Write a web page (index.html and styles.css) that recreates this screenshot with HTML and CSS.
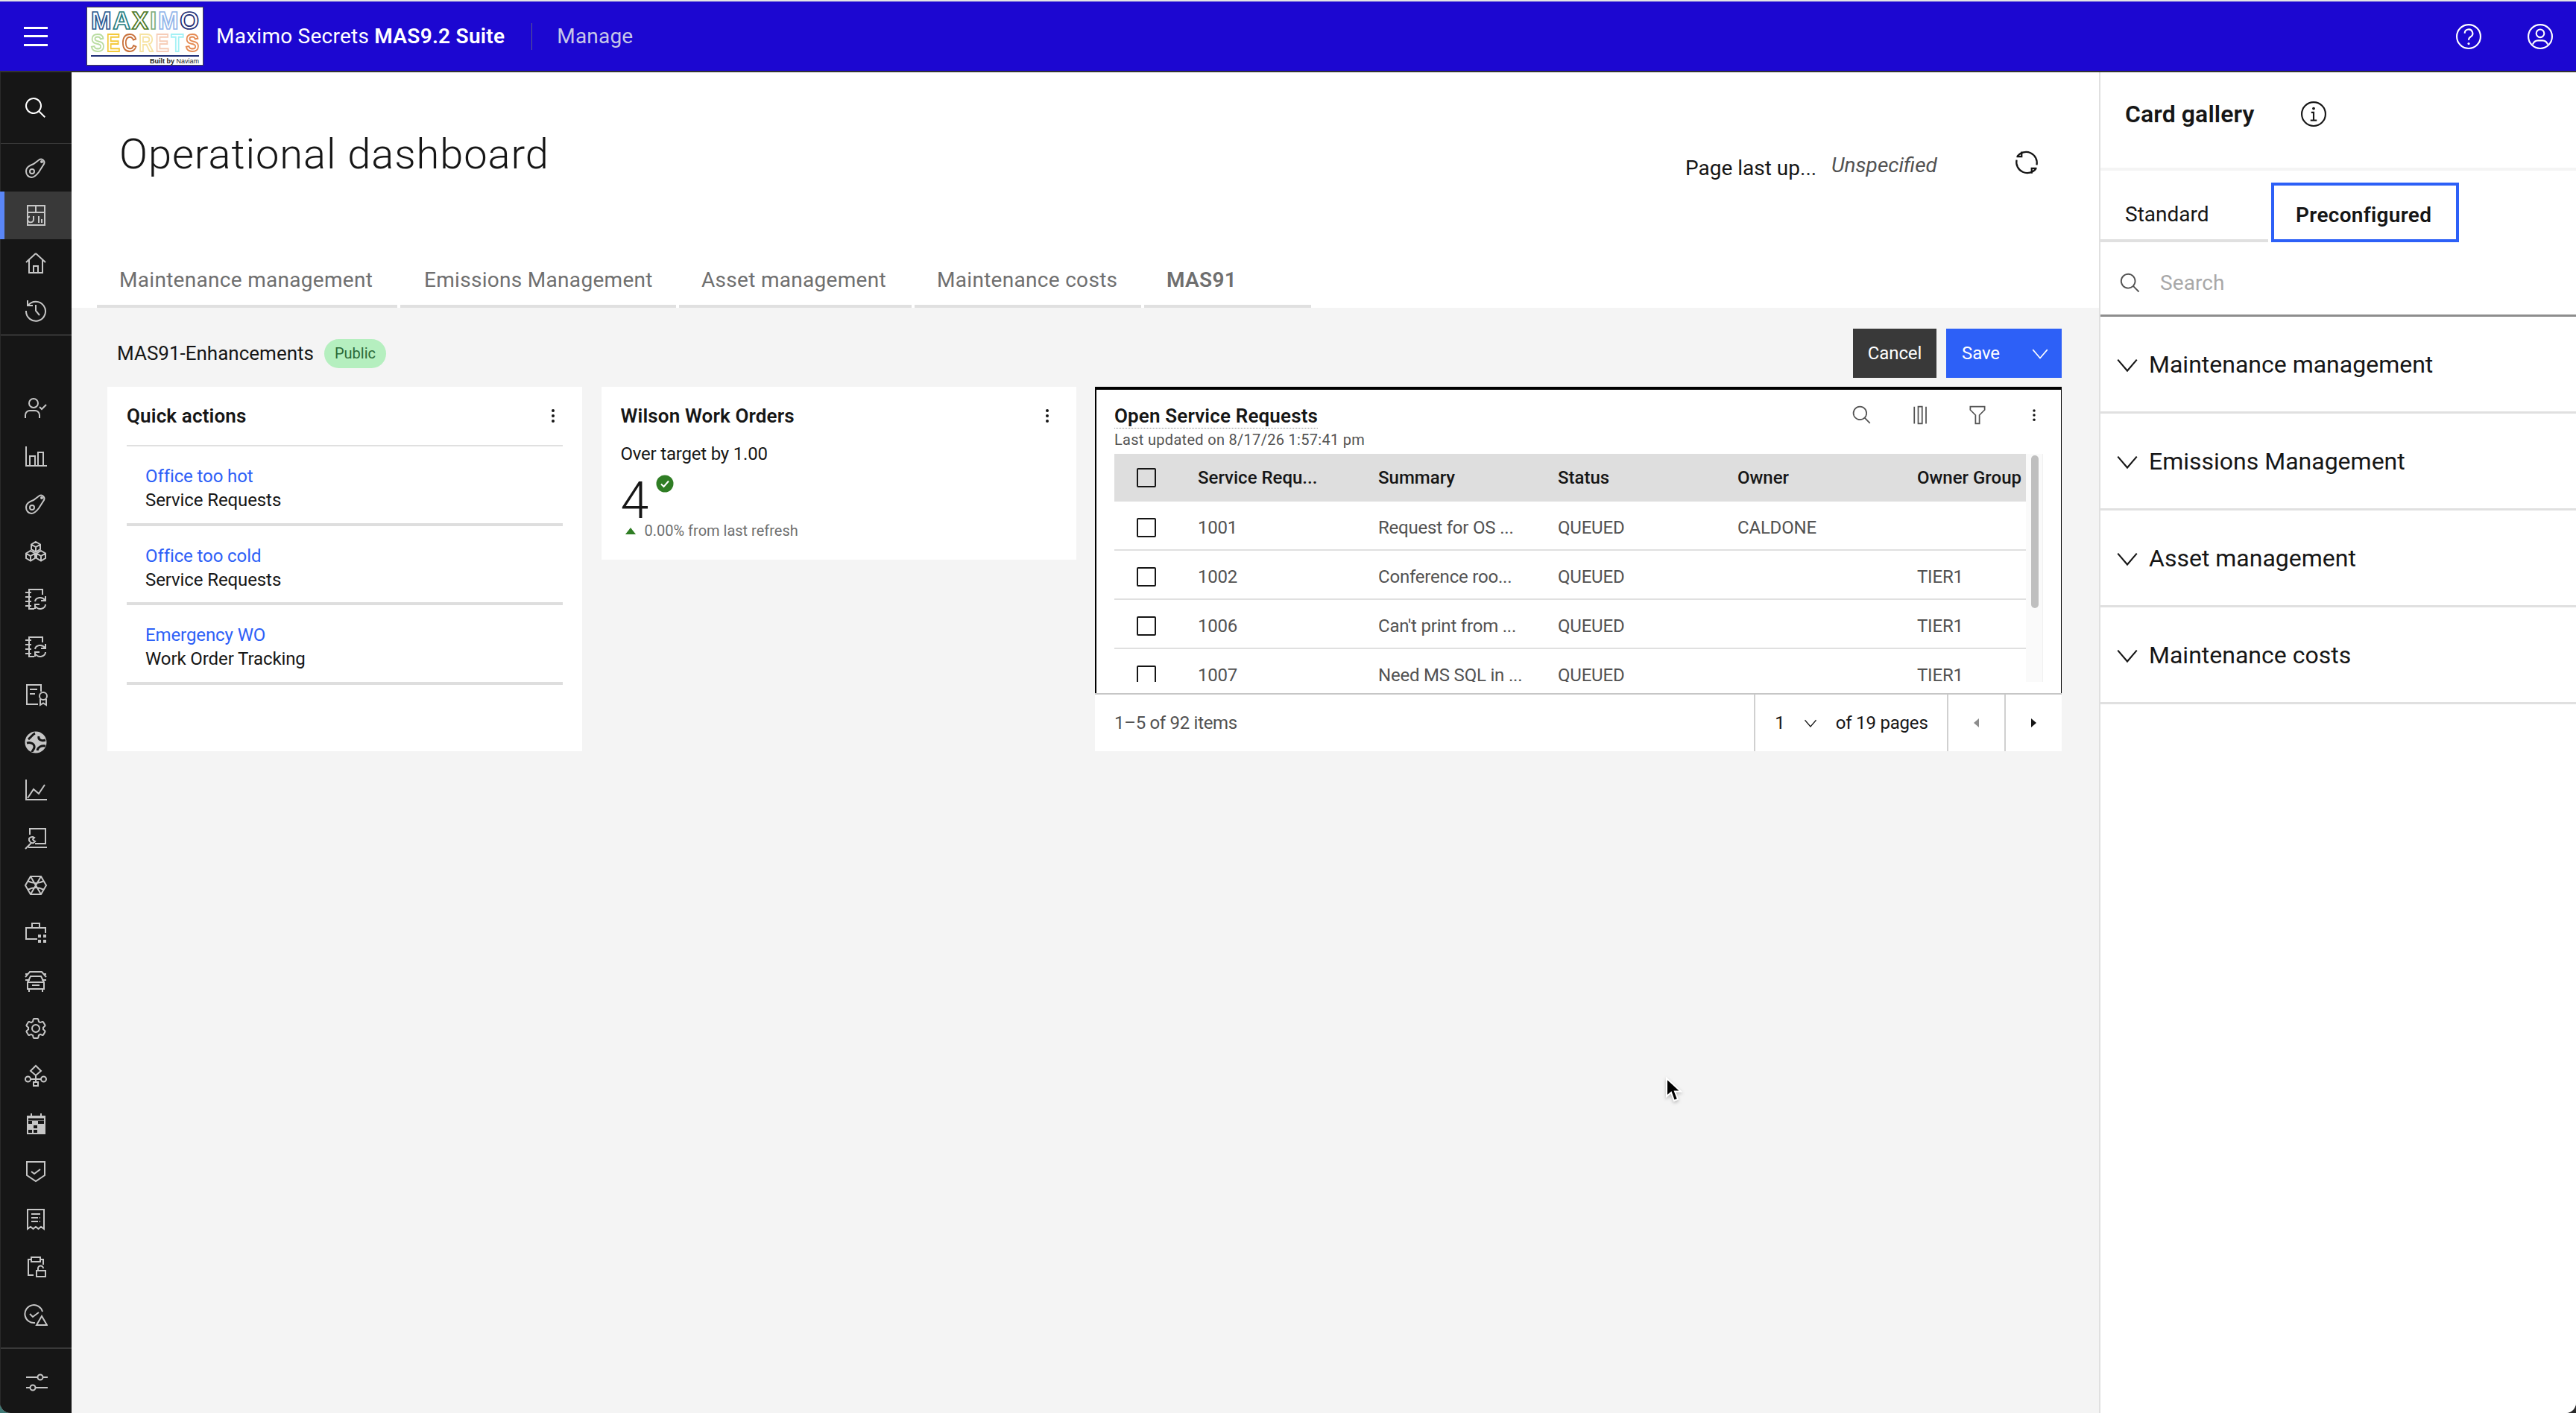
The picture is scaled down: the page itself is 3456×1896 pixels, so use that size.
FILE: index.html
```html
<!DOCTYPE html>
<html lang="en">
<head>
<meta charset="utf-8">
<title>Operational dashboard</title>
<link rel="stylesheet" href="styles.css">
</head>
<body>
<svg class="defs" width="0" height="0" aria-hidden="true">
  <symbol id="i-search" viewBox="0 0 32 32"><path class="f" d="M29,27.5859l-7.5521-7.5521a11.0177,11.0177,0,1,0-1.4141,1.4141L27.5859,29ZM4,13a9,9,0,1,1,9,9A9.01,9.01,0,0,1,4,13Z"/></symbol>
  <symbol id="i-belt" viewBox="0 0 32 32"><circle cx="11" cy="21" r="3"/><circle cx="24" cy="8" r="1"/><path d="M3 21C3 15 8 13 13 11L21 5a4.5 4.5 0 0 1 6 6L20 22C17 26 14 29 10 29C6 29 3 25 3 21Z"/></symbol>
  <symbol id="i-dash" viewBox="0 0 32 32"><rect x="5" y="3" width="23" height="26"/><path d="M5 12H28M16 3V12M13 17V21a4 4 0 1 1-5-3.500M20 17V26M24 21V26"/></symbol>
  <symbol id="i-home" viewBox="0 0 32 32"><path d="M16 3L3 15M16 3L29 15M7 12V29H25V12M13 29V20H19V29"/></symbol>
  <symbol id="i-history" viewBox="0 0 32 32"><path d="M5 2V9H12M5.500 9A13 13 0 1 1 3 16M16 8V16L21 22"/></symbol>
  <symbol id="i-usercheck" viewBox="0 0 32 32"><circle cx="13" cy="9" r="6"/><path d="M2 29V25a6 6 0 0 1 6-6H15a6 6 0 0 1 6 6V29M21 14L24 17L30 11"/></symbol>
  <symbol id="i-bars" viewBox="0 0 32 32"><path d="M3 3V29H31M8 29V16H15V29M19 29V11H26V29"/></symbol>
  <symbol id="i-cubes" viewBox="0 0 32 32"><path d="M16 3L22 6.500V13L16 16.500L10 13V6.500ZM10 6.500L16 10L22 6.500M16 10V16.500M9 15L15 18.500V25L9 28.500L3 25V18.500ZM3 18.500L9 22L15 18.500M9 22V28.500M23 15L29 18.500V25L23 28.500L17 25V18.500ZM17 18.500L23 22L29 18.500M23 22V28.500"/></symbol>
  <symbol id="i-docsync" viewBox="0 0 32 32"><path d="M25 10V3H7V29H14M2 7H10M2 13H10M2 19H10M2 25H10M15 19a7 6 0 0 1 13-2M29 12V18H23M29 23a7 6 0 0 1-13 3M15 29V23H21"/></symbol>
  <symbol id="i-cert" viewBox="0 0 32 32"><path d="M23 12V3H4V29H19M8 9H18M8 15H15M22 22V30L26 27.500L30 30V22"/><circle cx="26" cy="18" r="5"/></symbol>
  <symbol id="i-globe" viewBox="0 0 32 32"><circle class="f" cx="16" cy="16" r="14.500"/><path class="d" d="M6 12C10 9 12 5 15 4M4 17C8 16 13 17 14 21C15 25 11 27 11 29M20 8C19 12 23 15 29 13M18 27C19 22 24 20 29 21"/></symbol>
  <symbol id="i-line" viewBox="0 0 32 32"><path d="M3 2V29H31M5 27L13 15L20 21L28 9"/></symbol>
  <symbol id="i-wrench" viewBox="0 0 32 32"><path d="M8 12V4H29V24H15M6 29H31M2 31L10 23M7 17a5 5 0 0 0 6 6l2-2-2-1-1-2 2-2-2-1a5 5 0 0 0-5 2Z"/></symbol>
  <symbol id="i-hex" viewBox="0 0 32 32"><path d="M9 4H23L30 16L23 28H9L2 16ZM9 4L23 28M23 4L9 28M5 10Q16 16 27 10M5 22Q16 16 27 22"/></symbol>
  <symbol id="i-case" viewBox="0 0 32 32"><path d="M18 24H3V9H29V16M11 9V3H21V9"/><path class="f" d="M19 19h4v4h-4zM26 19h4v4h-4zM19 26h4v4h-4zM26 26h4v4h-4z" transform="translate(0 -1)"/></symbol>
  <symbol id="i-cars" viewBox="0 0 32 32"><path d="M2 11L8 4H24L30 11M6 7H2M26 7H30M5 18L9 10H23L27 18V27H5ZM2 15H8M24 15H30M5 18H27M11 22H21M7 27V31M25 27V31"/></symbol>
  <symbol id="i-gear" viewBox="0 0 32 32"><path class="f" d="M27,16.76c0-.25,0-.5,0-.76s0-.51,0-.77l1.92-1.68A2,2,0,0,0,29.3,11L26.94,7a2,2,0,0,0-1.73-1,2,2,0,0,0-.64.1l-2.43.82a11.35,11.35,0,0,0-1.31-.75l-.51-2.52a2,2,0,0,0-2-1.61H13.64a2,2,0,0,0-2,1.61l-.51,2.52a11.48,11.48,0,0,0-1.32.75L7.43,6.06A2,2,0,0,0,6.79,6,2,2,0,0,0,5.06,7L2.7,11a2,2,0,0,0,.41,2.51L5,15.24c0,.25,0,.5,0,.76s0,.51,0,.77L3.11,18.45A2,2,0,0,0,2.7,21L5.06,25a2,2,0,0,0,1.73,1,2,2,0,0,0,.64-.1l2.43-.82a11.35,11.35,0,0,0,1.31.75l.51,2.52a2,2,0,0,0,2,1.61h4.72a2,2,0,0,0,2-1.61l.51-2.52a11.48,11.48,0,0,0,1.32-.75l2.42.82a2,2,0,0,0,.64.1,2,2,0,0,0,1.73-1L29.3,21a2,2,0,0,0-.41-2.51ZM25.21,24l-3.43-1.16a8.86,8.86,0,0,1-2.71,1.57L18.36,28H13.64l-.71-3.55a9.36,9.36,0,0,1-2.7-1.57L6.79,24,4.43,20l2.72-2.4a8.9,8.9,0,0,1,0-3.13L4.43,12,6.79,8l3.43,1.16a8.86,8.86,0,0,1,2.71-1.57L13.64,4h4.72l.71,3.55a9.36,9.36,0,0,1,2.7,1.57L25.21,8,27.57,12l-2.72,2.4a8.9,8.9,0,0,1,0,3.13L27.57,20Z"/><path class="f" d="M16,22a6,6,0,1,1,6-6A5.94,5.94,0,0,1,16,22Zm0-10a3.91,3.91,0,0,0-4,4,3.91,3.91,0,0,0,4,4,3.91,3.91,0,0,0,4-4A3.91,3.91,0,0,0,16,12Z"/></symbol>
  <symbol id="i-flow" viewBox="0 0 32 32"><path d="M16 2L23 9L16 15L9 9ZM16 15V24M9 20H23"/><circle cx="5.500" cy="20" r="3.500"/><circle cx="26.500" cy="20" r="3.500"/><rect x="13" y="24" width="6" height="5"/></symbol>
  <symbol id="i-cal" viewBox="0 0 32 32"><rect class="f" x="4" y="5" width="25" height="25"/><path class="d" d="M6 10H27"/><path class="df" d="M6 12h5v4H6zM19 12h8v4h-8zM13 18h5v4h-5zM6 24h5v4H6zM13 24h5v4h-5z"/><path d="M10 2V6M23 2V6"/></symbol>
  <symbol id="i-shield" viewBox="0 0 32 32"><path d="M4 3H28V21L16 29L4 21ZM10 16L14 19L22 13"/></symbol>
  <symbol id="i-receipt" viewBox="0 0 32 32"><path d="M5 3H27V29L23 26L19.500 29L16 26L12.500 29L9 26L5 29ZM10 9H22M10 14H19M21 14H22M10 19H19M21 19H22"/></symbol>
  <symbol id="i-cliplock" viewBox="0 0 32 32"><path d="M13 27H6V6H10M22 6H26V13M19 21V18a3.500 3.500 0 0 1 7 0"/><rect x="10" y="3" width="12" height="6"/><rect x="17" y="21" width="12" height="8"/></symbol>
  <symbol id="i-circtri" viewBox="0 0 32 32"><path d="M15 27A12 12 0 1 1 25 12M8 15L12 19L20 13M17 30L24 18L31 30Z"/></symbol>
  <symbol id="i-sliders" viewBox="0 0 32 32"><path d="M2 8H18M24 8H31M2 22H8M14 22H31"/><circle cx="21" cy="8" r="3.500"/><circle cx="11" cy="22" r="3.500"/></symbol>
  <symbol id="i-chev" viewBox="0 0 32 32"><path d="M4 10L16 24L28 10"/></symbol>
  <symbol id="i-kebab" viewBox="0 0 32 32"><circle class="f" cx="16" cy="9" r="2"/><circle class="f" cx="16" cy="16" r="2"/><circle class="f" cx="16" cy="23" r="2"/></symbol>
</svg>

<div class="window">
  <header class="topbar">
    <button class="menu" aria-label="Menu"><span></span><span></span><span></span></button>
    <div class="logo">
      <div class="logo-row"><b class="c1">M</b><b class="c2">A</b><b class="c3">X</b><b class="c4">I</b><b class="c5">M</b><b class="c6">O</b></div>
      <div class="logo-row logo-row2"><b class="c7">S</b><b class="c8">E</b><b class="c9">C</b><b class="c10">R</b><b class="c11">E</b><b class="c12">T</b><b class="c13">S</b></div>
      <div class="logo-rule"></div>
      <div class="logo-by"><strong>Built by</strong> <span>Naviam</span></div>
    </div>
    <div class="brand">Maximo Secrets <strong>MAS9.2 Suite</strong></div>
    <div class="app">Manage</div>
    <div class="top-actions">
      <svg class="top-ic" viewBox="0 0 32 32"><circle cx="16" cy="16" r="15"/><path d="M11 12a5 5 0 1 1 7.500 4.300C16.500 17.500 16 18.500 16 20.500"/><circle class="f" cx="16" cy="25" r="1.500"/></svg>
      <svg class="top-ic" viewBox="0 0 32 32"><circle cx="16" cy="16" r="15"/><circle cx="16" cy="12" r="5"/><path d="M6.500 26C8 22 10 21 13 21H19C22 21 24 22 25.500 26"/></svg>
    </div>
  </header>

  <div class="body">
    <nav class="sidenav">
      <div class="nav-search"><svg class="ic ic-white"><use href="#i-search"/></svg></div>
      <div class="nav-group nav-g2">
        <a class="nav-item"><svg class="ic"><use href="#i-belt"/></svg></a>
        <a class="nav-item active"><svg class="ic"><use href="#i-dash"/></svg></a>
        <a class="nav-item"><svg class="ic"><use href="#i-home"/></svg></a>
        <a class="nav-item"><svg class="ic"><use href="#i-history"/></svg></a>
      </div>
      <div class="nav-group nav-g3">
        <a class="nav-item"><svg class="ic"><use href="#i-usercheck"/></svg></a>
        <a class="nav-item"><svg class="ic"><use href="#i-bars"/></svg></a>
        <a class="nav-item"><svg class="ic"><use href="#i-belt"/></svg></a>
        <a class="nav-item"><svg class="ic"><use href="#i-cubes"/></svg></a>
        <a class="nav-item"><svg class="ic"><use href="#i-docsync"/></svg></a>
        <a class="nav-item"><svg class="ic"><use href="#i-docsync"/></svg></a>
        <a class="nav-item"><svg class="ic"><use href="#i-cert"/></svg></a>
        <a class="nav-item"><svg class="ic"><use href="#i-globe"/></svg></a>
        <a class="nav-item"><svg class="ic"><use href="#i-line"/></svg></a>
        <a class="nav-item"><svg class="ic"><use href="#i-wrench"/></svg></a>
        <a class="nav-item"><svg class="ic"><use href="#i-hex"/></svg></a>
        <a class="nav-item"><svg class="ic"><use href="#i-case"/></svg></a>
        <a class="nav-item"><svg class="ic"><use href="#i-cars"/></svg></a>
        <a class="nav-item"><svg class="ic"><use href="#i-gear"/></svg></a>
        <a class="nav-item"><svg class="ic"><use href="#i-flow"/></svg></a>
        <a class="nav-item"><svg class="ic"><use href="#i-cal"/></svg></a>
        <a class="nav-item"><svg class="ic"><use href="#i-shield"/></svg></a>
        <a class="nav-item"><svg class="ic"><use href="#i-receipt"/></svg></a>
        <a class="nav-item"><svg class="ic"><use href="#i-cliplock"/></svg></a>
        <a class="nav-item"><svg class="ic"><use href="#i-circtri"/></svg></a>
      </div>
      <div class="nav-bottom"><svg class="ic"><use href="#i-sliders"/></svg></div>
    </nav>

    <main class="main">
      <section class="page-head">
        <div class="head-row">
          <h1 class="title">Operational dashboard</h1>
          <div class="updated">
            <span class="upd-label">Page last up...</span>
            <span class="upd-value">Unspecified</span>
            <svg class="refresh" viewBox="0 0 32 32"><path d="M10 3V9H4M5 8.500A13 13 0 0 1 28 19M22 29V23H28M27 23.500A13 13 0 0 1 4 13"/></svg>
          </div>
        </div>
        <div class="tabs">
          <div class="tab t1">Maintenance management</div>
          <div class="tab t2">Emissions Management</div>
          <div class="tab t3">Asset management</div>
          <div class="tab t4">Maintenance costs</div>
          <div class="tab t5 on">MAS91</div>
        </div>
      </section>

      <section class="canvas">
        <div class="dash-row">
          <div class="dash-name"><span>MAS91-Enhancements</span><span class="badge">Public</span></div>
          <div class="dash-btns">
            <button class="btn btn-cancel">Cancel</button>
            <button class="btn btn-save"><span>Save</span><svg class="ic-btn"><use href="#i-chev"/></svg></button>
          </div>
        </div>

        <div class="cards">
          <article class="card card-quick">
            <div class="card-head"><h2>Quick actions</h2><svg class="kebab"><use href="#i-kebab"/></svg></div>
            <div class="qa-list">
              <div class="qa"><a>Office too hot</a><span>Service Requests</span></div>
              <div class="qa"><a>Office too cold</a><span>Service Requests</span></div>
              <div class="qa"><a>Emergency WO</a><span>Work Order Tracking</span></div>
            </div>
          </article>

          <article class="card card-kpi">
            <div class="card-head"><h2>Wilson Work Orders</h2><svg class="kebab"><use href="#i-kebab"/></svg></div>
            <div class="kpi-sub">Over target by 1.00</div>
            <div class="kpi-val">4<svg class="kpi-check" viewBox="0 0 24 24"><circle cx="12" cy="12" r="11.500"/><path d="M7 12.500L10.500 16L17 8.500"/></svg></div>
            <div class="kpi-trend"><i class="tri"></i>0.00% from last refresh</div>
          </article>

          <article class="card card-table">
            <div class="tbl-panel">
              <div class="tbl-head">
                <div>
                  <h2 class="tbl-title">Open Service Requests</h2>
                  <div class="tbl-updated">Last updated on 8/17/26 1:57:41 pm</div>
                </div>
                <div class="tbl-tools">
                  <svg class="tool"><use href="#i-search"/></svg>
                  <svg class="tool" viewBox="0 0 32 32"><path class="sk" d="M6 3V29M12 3H18V29H12ZM24 3V29"/></svg>
                  <svg class="tool" viewBox="0 0 32 32"><path class="sk" d="M5 3H27V8L19 16V29H13V16L5 8Z"/></svg>
                  <svg class="tool"><use href="#i-kebab"/></svg>
                </div>
              </div>
              <div class="tbl-wrap">
                <div class="tbl">
                  <div class="row row-h"><span class="cb"></span><span>Service Requ...</span><span>Summary</span><span>Status</span><span>Owner</span><span>Owner Group</span></div>
                  <div class="row"><span class="cb"></span><span>1001</span><span>Request for OS ...</span><span>QUEUED</span><span>CALDONE</span><span></span></div>
                  <div class="row"><span class="cb"></span><span>1002</span><span>Conference roo...</span><span>QUEUED</span><span></span><span>TIER1</span></div>
                  <div class="row"><span class="cb"></span><span>1006</span><span>Can't print from ...</span><span>QUEUED</span><span></span><span>TIER1</span></div>
                  <div class="row"><span class="cb"></span><span>1007</span><span>Need MS SQL in ...</span><span>QUEUED</span><span></span><span>TIER1</span></div>
                </div>
                <div class="scroll"><div class="thumb"></div></div>
              </div>
            </div>
            <div class="pager">
              <div class="pg-items">1–5 of 92 items</div>
              <div class="pg-pages"><span>1</span><svg class="pg-chev"><use href="#i-chev"/></svg><span class="pg-of">of 19 pages</span></div>
              <div class="pg-btn"><i class="arr arr-l"></i></div>
              <div class="pg-btn"><i class="arr arr-r"></i></div>
            </div>
          </article>
        </div>
      </section>
    </main>

    <aside class="gallery">
      <div class="gal-head"><h2>Card gallery</h2><svg class="info" viewBox="0 0 32 32"><circle cx="16" cy="16" r="15"/><path d="M12 24H20M16 24V14H13"/><circle class="f" cx="16" cy="9" r="1.800"/></svg></div>
      <div class="gal-tabs">
        <div class="gal-tab">Standard</div>
        <div class="gal-tab sel">Preconfigured</div>
      </div>
      <div class="gal-search"><svg class="gal-s-ic"><use href="#i-search"/></svg><span>Search</span></div>
      <div class="acc"><svg class="acc-ic"><use href="#i-chev"/></svg>Maintenance management</div>
      <div class="acc"><svg class="acc-ic"><use href="#i-chev"/></svg>Emissions Management</div>
      <div class="acc"><svg class="acc-ic"><use href="#i-chev"/></svg>Asset management</div>
      <div class="acc"><svg class="acc-ic"><use href="#i-chev"/></svg>Maintenance costs</div>
    </aside>
  </div>

  <svg class="cursor" viewBox="0 0 24 36"><path d="M3 2V26L9 21L13 32L18 30L14 19.500H22Z"/></svg>
</div>
</body>
</html>
```
FILE: styles.css
```css
* { box-sizing: border-box; }
html, body { margin: 0; height: 100%; }
body {
  font-family: Roboto, "Noto Sans", sans-serif;
  color: #161616;
  background: linear-gradient(90deg, #3f7a76 50%, #2a2a2a 50%);
  overflow: hidden;
}
h1, h2 { margin: 0; font-weight: 400; }
.defs { position: absolute; }

.window { position: relative; width: 3456px; height: 1896px; display: flex; flex-direction: column; overflow: hidden; border-radius: 0 0 14px 14px; background: #f4f4f4; }

/* icon defaults */
.ic, .kebab, .tool, .ic-btn, .pg-chev, .acc-ic, .gal-s-ic { fill: none; stroke: currentColor; stroke-width: 2; }
.ic { width: 32px; height: 32px; color: #c6c6c6; display: block; }
.ic-white { color: #fff; }
symbol .f, .f { fill: currentColor; stroke: none; }
.d { stroke: #161616; stroke-width: 3; fill: none; }
.df { fill: #161616; stroke: none; }

/* top bar */
.topbar { height: 97px; flex: none; display: flex; align-items: center; background: #1c07d1; border-top: 2px solid #e4e4e4; border-bottom: 2px solid #333; color: #fff; }
.menu { width: 96px; height: 100%; background: none; border: 0; padding: 0; display: flex; flex-direction: column; align-items: center; justify-content: center; gap: 8.500px; }
.menu span { display: block; width: 32px; height: 3px; background: #fff; }
.logo { width: 157px; height: 79px; margin-left: 20px; background: #fff; border: 1px solid #444; padding: 3px 5px 0; display: flex; flex-direction: column; color: #222; }
.logo-row { display: flex; justify-content: space-between; height: 30px; font-family: "Liberation Sans", sans-serif; font-size: 33px; line-height: 30px; }
.logo-row2 { font-size: 27px; transform: scaleY(1.2); }
.logo-row b { color: transparent; -webkit-text-stroke: 1.700px var(--lc); font-weight: 700; }
.c1 { --lc: #2f5d93; } .c2 { --lc: #2a7f83; } .c3 { --lc: #4e7a2a; } .c4 { --lc: #7fae7c; } .c5 { --lc: #93b6ea; } .c6 { --lc: #1f2e75; }
.c7 { --lc: #b9dca0; } .c8 { --lc: #f3c93c; } .c9 { --lc: #c8703a; } .c10 { --lc: #f7e3a2; } .c11 { --lc: #f6cdb8; } .c12 { --lc: #a4f1f5; } .c13 { --lc: #e58a52; }
.logo-rule { height: 3px; background: #1f2e75; margin-top: 1px; }
.logo-by { font-size: 9px; line-height: 10px; text-align: right; margin-top: 1px; font-family: "Liberation Sans", sans-serif; }
.brand { margin-left: 17px; font-size: 28px; letter-spacing: .25px; white-space: nowrap; }
.brand strong { font-weight: 600; }
.app { margin-left: 36px; padding-left: 33px; height: 36px; line-height: 36px; border-left: 1px solid #5a5a8f; font-size: 28px; color: #c6c6e8; letter-spacing: .2px; }
.top-actions { margin-left: auto; display: flex; gap: 62px; padding-right: 31px; }
.top-ic { width: 34px; height: 34px; fill: none; stroke: #fff; stroke-width: 2; color: #fff; }

/* layout */
.body { flex: 1; min-height: 0; display: flex; }

/* side nav */
.sidenav { width: 96px; flex: none; background: #161616; display: flex; flex-direction: column; border-left: 1px solid #2a2a2a; }
.nav-search { height: 96px; display: flex; align-items: center; justify-content: center; border-bottom: 1px solid #393939; }
.nav-search .ic { margin-left: -1px; }
.nav-group { display: flex; flex-direction: column; }
.nav-g2 { height: 258px; border-bottom: 3px solid #2e2e2e; }
.nav-g3 { padding-top: 65px; height: 1359px; border-bottom: 2px solid #393939; }
.nav-item { height: 64px; flex: none; display: flex; align-items: center; justify-content: center; margin-left: -1px; }
.nav-item.active { background: #393939; border-left: 6px solid #5a86f7; padding-right: 6px; }
.nav-bottom { flex: 1; display: flex; align-items: center; justify-content: center; padding-top: 6px; }

/* main */
.main { flex: none; width: 2720px; display: flex; flex-direction: column; }
.page-head { height: 316px; background: #fff; display: flex; flex-direction: column; justify-content: space-between; }
.head-row { display: flex; justify-content: space-between; align-items: flex-start; padding: 74px 79px 0 64px; }
.title { font-size: 56px; line-height: 72px; font-weight: 300; letter-spacing: .95px; }
.updated { display: flex; align-items: center; gap: 18px; margin-top: 28px; font-size: 28px; }
.upd-label { margin-top: 10px; width: 178px; white-space: nowrap; }
.upd-value { margin-top: 2px; font-style: italic; color: #525252; width: 226px; white-space: nowrap; }
.refresh { width: 36px; height: 36px; fill: none; stroke: #161616; stroke-width: 2; margin-top: -6px; }
.tabs { display: flex; gap: 4px; padding-left: 34px; }
.tab { height: 69px; padding: 14px 0 0 30px; font-size: 28px; line-height: 36px; color: #6f6f6f; border-bottom: 4px solid #e0e0e0; white-space: nowrap; letter-spacing: .3px; }
.t1 { width: 403px; } .t2 { width: 370px; padding-left: 32px; } .t3 { width: 312px; } .t4 { width: 304px; } .t5 { width: 224px; }
.tab.on { font-weight: 600; }

.canvas { flex: 1; padding: 0 50px 0 48px; }
.dash-row { display: flex; justify-content: space-between; padding-top: 28px; height: 106px; }
.dash-name { display: flex; align-items: center; height: 66px; margin-left: 13px; gap: 14px; font-size: 26px; }
.badge { height: 39px; line-height: 39px; padding: 0 14px; border-radius: 20px; background: #b5efbf; color: #2b6a37; font-size: 20px; }
.dash-btns { display: flex; gap: 13px; }
.btn { height: 66px; border: 0; color: #fff; font: inherit; font-size: 24px; padding: 0; letter-spacing: -.1px; }
.btn-cancel { width: 112px; background: #393939; }
.btn-save { width: 155px; background: #2d60f7; display: flex; align-items: center; justify-content: space-between; padding: 0 16px 0 21px; }
.ic-btn { width: 26px; height: 26px; color: #fff; }

.cards { display: flex; gap: 25.5px; align-items: flex-start; }
.card { background: #fff; flex: none; }
.card-quick { width: 637px; height: 489px; padding: 0 26px; }
.card-kpi { width: 637px; height: 232px; padding: 0 26px; }
.card-table { width: 1297px; height: 489px; display: flex; flex-direction: column; }
.card-head { display: flex; justify-content: space-between; align-items: center; height: 78px; }
.card-head h2 { font-size: 26px; font-weight: 600; letter-spacing: .15px; }
.kebab { width: 32px; height: 32px; color: #161616; stroke: none; margin-right: -3px; }

.qa-list { border-top: 2px solid #e0e0e0; }
.qa { height: 106.500px; padding: 28px 0 0 25px; display: flex; flex-direction: column; gap: 8px; border-bottom: 4px solid #dedede; font-size: 24px; line-height: 24px; letter-spacing: -.1px; }
.qa a { color: #2d60f7; }
.kpi-sub { font-size: 24px; line-height: 28px; margin-top: -2px; letter-spacing: -.2px; }
.kpi-val { position: relative; font-size: 68px; font-weight: 300; line-height: 68px; margin-top: 15px; height: 62px; }
.kpi-check { position: absolute; left: 47px; top: -1px; width: 24px; height: 24px; fill: #2f7d24; }
.kpi-check path { fill: none; stroke: #fff; stroke-width: 2; }
.kpi-trend { display: flex; align-items: center; font-size: 20px; line-height: 24px; color: #6f6f6f; }
.tri { width: 0; height: 0; margin: 0 12px 0 6px; border-left: 7px solid transparent; border-right: 7px solid transparent; border-bottom: 9px solid #2f7d24; }

.tbl-panel { height: 411px; border: 2px solid #000; border-top-width: 4px; border-bottom: 0; border-right-width: 1px; padding-left: 24px; display: flex; flex-direction: column; }
.tbl-head { height: 86px; flex: none; display: flex; justify-content: space-between; padding-top: 19px; }
.tbl-title { font-size: 26px; font-weight: 600; line-height: 32px; display: inline-block; border-bottom: 1px dotted #8d8d8d; letter-spacing: .15px; }
.tbl-updated { font-size: 20px; line-height: 24px; color: #525252; margin-top: 3px; letter-spacing: .3px; }
.tbl-tools { display: flex; gap: 48px; padding-right: 22px; }
.tool { width: 28px; height: 28px; color: #525252; stroke: #525252; margin-top: 1px; fill: none; stroke-width: 2; }
.tool:first-child { margin-left: -3px; margin-right: 3px; }
.sk { fill: none; stroke: #525252; stroke-width: 2; }
.tbl-tools .tool:last-child { stroke: none; color: #161616; }
.tbl-wrap { height: 306px; display: flex; overflow: hidden; }
.tbl { width: 1223px; flex: none; }
.row { display: grid; grid-template-columns: 112px 242px 241px 241px 241px 1fr; align-items: center; height: 66px; padding-top: 5px; border-bottom: 2px solid #e0e0e0; font-size: 24px; color: #525252; white-space: nowrap; letter-spacing: -.2px; }
.row-h { height: 64px; padding-top: 0; background: #dedede; border: 0; color: #161616; font-weight: 500; letter-spacing: 0; }
.cb { width: 26px; height: 26px; margin-left: 30px; border: 2px solid #161616; border-radius: 2px; }
.scroll { width: 23px; flex: none; background: #fafafa; border-right: 1px solid #f0f0f0; padding: 2px 5px 0 7px; }
.thumb { height: 205px; background: #bfbfbf; border-radius: 6px; }

.pager { height: 78px; flex: none; display: flex; align-items: center; border-top: 2px solid #c6c6c6; color: #525252; font-size: 24px; }
.pg-items { width: 887px; padding-left: 26px; letter-spacing: -.3px; }
.pg-pages { width: 260px; height: 100%; border-left: 2px solid #d0d0d0; display: flex; align-items: center; padding-left: 26px; color: #161616; }
.pg-chev { width: 20px; height: 20px; margin-left: 24px; }
.pg-of { margin-left: 24px; letter-spacing: -.2px; }
.pg-btn { width: 77px; height: 100%; border-left: 2px solid #d0d0d0; display: flex; align-items: center; justify-content: center; }
.arr { width: 0; height: 0; border-top: 6px solid transparent; border-bottom: 6px solid transparent; }
.arr-l { border-right: 7px solid #8d8d8d; }
.arr-r { border-left: 7px solid #161616; }

/* gallery */
.gallery { flex: 1; background: #fff; border-left: 2px solid #e0e0e0; }
.gal-head { height: 132px; border-bottom: 4px solid #f4f4f4; display: flex; align-items: center; padding: 0 0 16px 33px; gap: 63px; }
.gal-head h2 { font-size: 32px; font-weight: 600; letter-spacing: .1px; }
.info { width: 34px; height: 34px; fill: none; stroke: #161616; stroke-width: 2; color: #161616; }
.gal-tabs { display: flex; align-items: flex-end; height: 96px; }
.gal-tab { width: 225px; height: 56px; padding: 1px 0 0 33px; border-bottom: 4px solid #e0e0e0; font-size: 28px; line-height: 36px; }
.gal-tab.sel { width: 252px; height: 80px; margin-left: 4px; padding: 22px 0 0 29px; border: 4px solid #2d60f7; font-weight: 600; letter-spacing: .3px; }
.gal-search { height: 100px; display: flex; align-items: center; padding: 12px 0 0 25px; gap: 25px; border-bottom: 3px solid #8d8d8d; font-size: 28px; color: #a8a8a8; letter-spacing: .1px; }
.gal-s-ic { width: 30px; height: 30px; color: #525252; stroke: none; }
.acc { height: 130px; display: flex; align-items: center; padding: 0 0 0 19px; gap: 12px; font-size: 32px; border-bottom: 3px solid #e0e0e0; }
.acc-ic { width: 34px; height: 34px; color: #161616; }

.cursor { position: absolute; left: 2233px; top: 1445px; width: 24px; height: 36px; fill: #000; stroke: #fff; stroke-width: 2; filter: drop-shadow(0 2px 2px rgba(0,0,0,.25)); }
```
